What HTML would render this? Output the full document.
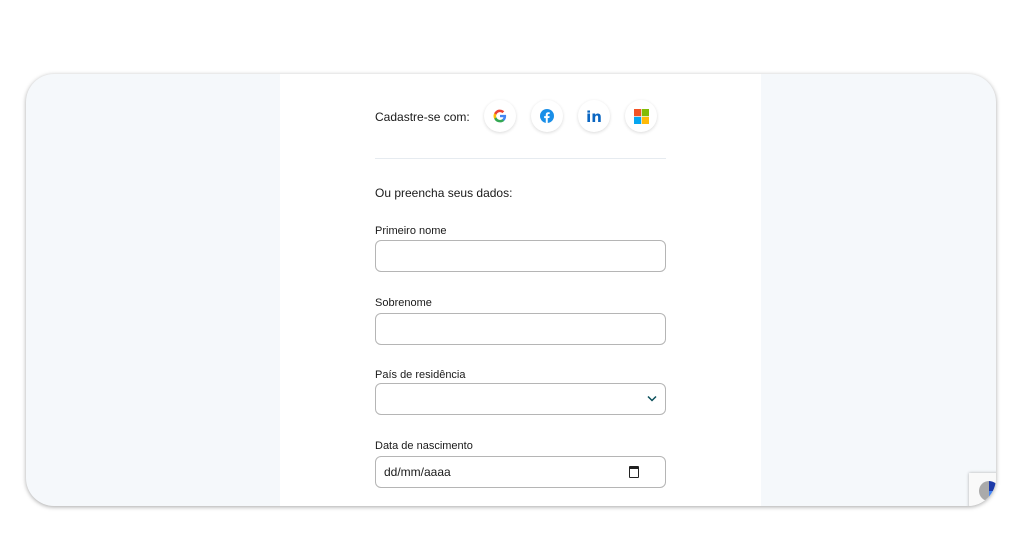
<!DOCTYPE html>
<html><head><meta charset="utf-8"><style>
body{margin:0;width:1024px;height:536px;background:#fff;position:relative;overflow:hidden;font-family:"Liberation Sans",sans-serif;color:#1a1a1a}
.frame{position:absolute;left:26px;top:74px;width:970px;height:432px;border-radius:28px;background:#f5f8fb;box-shadow:0 1px 4px rgba(0,0,0,.35);overflow:hidden}
.col{position:absolute;left:254px;top:0;width:481px;height:432px;background:#fff}
.t{position:absolute;font-size:11px;color:#1a1a1a}
.c{position:absolute;top:26px;width:32px;height:32px;border-radius:50%;background:#fff;box-shadow:0 1px 3px rgba(0,0,0,.15);display:flex;align-items:center;justify-content:center}
.hr{position:absolute;left:95px;top:84px;width:291px;height:1px;background:#e6ebf0}
.in{position:absolute;left:95px;width:289px;height:30px;border:1px solid #b5b5b5;border-radius:6px;background:#fff}
</style></head><body>
<div class="frame"><div class="col">
<div class="t" style="left:95px;top:36px;font-size:12px">Cadastre-se com:</div>
<div class="c" style="left:204px"><svg width="14" height="14" viewBox="0 0 24 24"><path d="M22.5 12.2c0-.8-.1-1.5-.2-2.2H12v4.2h5.9a5 5 0 0 1-2.2 3.3v2.7h3.6c2-1.9 3.2-4.7 3.2-8z" fill="#4285F4"/><path d="M12 23c3 0 5.5-1 7.3-2.7l-3.6-2.7c-1 .7-2.2 1.1-3.7 1.1-2.9 0-5.3-1.9-6.2-4.5H2.1v2.8A11 11 0 0 0 12 23z" fill="#34A853"/><path d="M5.8 14.2a6.6 6.6 0 0 1 0-4.3V7.1H2.1a11 11 0 0 0 0 9.9z" fill="#FBBC05"/><path d="M12 5.4c1.6 0 3.1.6 4.2 1.7l3.2-3.2A11 11 0 0 0 2.1 7.1l3.7 2.8C6.7 7.3 9.1 5.4 12 5.4z" fill="#EA4335"/></svg></div>
<div class="c" style="left:251px"><svg width="14" height="14" viewBox="0 0 24 24"><circle cx="12" cy="12" r="12" fill="#1a8fe8"/><path d="M13.3 24v-8.5h2.8l.4-3.3h-3.2v-2c0-.9.3-1.6 1.6-1.6h1.7V5.7c-.3 0-1.3-.1-2.5-.1-2.5 0-4.2 1.5-4.2 4.3v2.4H7.1v3.3h2.8V24z" fill="#fff"/></svg></div>
<div class="c" style="left:298px"><span style="color:#0a66c2;font-weight:bold;font-size:15px;font-family:'DejaVu Sans',sans-serif;margin-top:2px">in</span></div>
<div class="c" style="left:345px"><svg width="15" height="15" viewBox="0 0 22 22"><rect x="0" y="0" width="10.5" height="10.5" fill="#f35325"/><rect x="11.5" y="0" width="10.5" height="10.5" fill="#81bc06"/><rect x="0" y="11.5" width="10.5" height="10.5" fill="#05a6f0"/><rect x="11.5" y="11.5" width="10.5" height="10.5" fill="#ffba08"/></svg></div>
<div class="hr"></div>
<div class="t" style="left:95px;top:112px;font-size:12px">Ou preencha seus dados:</div>
<div class="t" style="left:95px;top:151px">Primeiro nome</div>
<div class="in" style="top:166px"></div>
<div class="t" style="left:95px;top:223px">Sobrenome</div>
<div class="in" style="top:239px"></div>
<div class="t" style="left:95px;top:295px">País de residência</div>
<div class="in" style="top:309px"><svg style="position:absolute;right:8px;top:11px" width="10" height="7" viewBox="0 0 10 7"><path d="M1 1.5l4 4 4-4" fill="none" stroke="#0a4f5a" stroke-width="1.5"/></svg></div>
<div class="t" style="left:95px;top:366px">Data de nascimento</div>
<div class="in" style="top:382px"><span style="position:absolute;left:8px;top:8px;font-size:12px">dd/mm/aaaa</span><span style="position:absolute;right:26px;top:9px;width:8px;height:8px;border:1.5px solid #222;border-top-width:3px;border-radius:1px"></span></div>
</div>
<div style="position:absolute;left:943px;top:399px;width:30px;height:40px;background:#f9f9f9;box-shadow:0 0 3px rgba(0,0,0,.3)"><div style="position:absolute;left:10px;top:8px;width:20px;height:20px;border-radius:50%;background:conic-gradient(#1c3aa9 0 25%,#4285f4 25% 50%,#aaa 50% 100%)"></div></div>
</div>
</body></html>
